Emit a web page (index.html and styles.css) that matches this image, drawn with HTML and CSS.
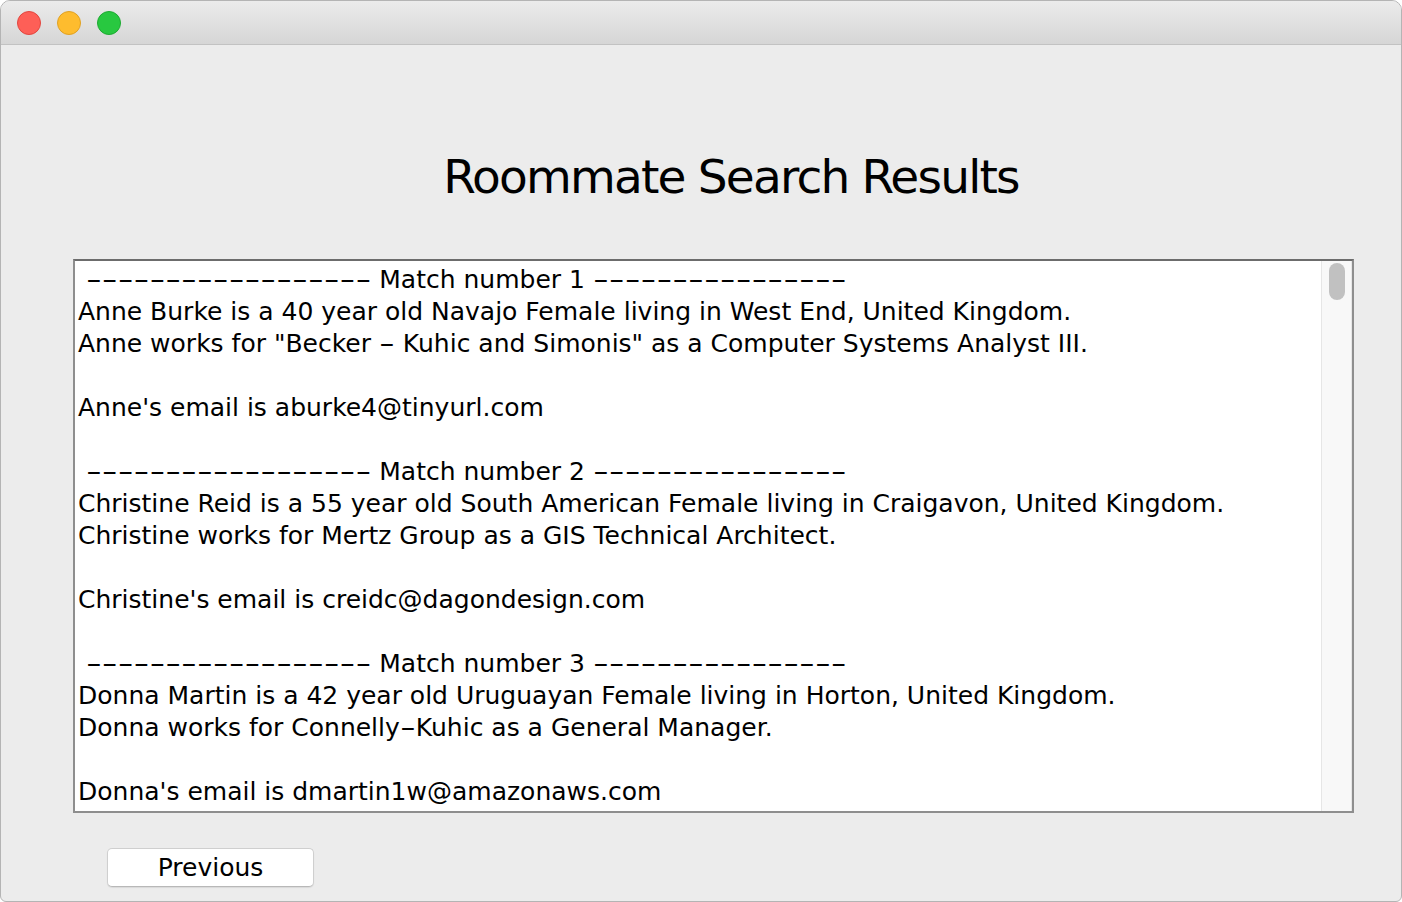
FILE: index.html
```html
<!DOCTYPE html>
<html>
<head>
<meta charset="utf-8">
<link rel="stylesheet" href="styles.css">
</head>
<body>
<div class="window">
  <div class="titlebar">
    <span class="light red"></span>
    <span class="light yellow"></span>
    <span class="light green"></span>
  </div>
  <div class="content">
    <h1 class="heading">Roommate Search Results</h1>
    <div class="textarea">
      <div class="text"><div class="line"> <span class="dash d18">------------------</span> Match number 1 <span class="dash d16">----------------</span></div><div class="line">Anne Burke is a 40 year old Navajo Female living in West End, United Kingdom.</div><div class="line">Anne works for "Becker <span class="dash d1">-</span> Kuhic and Simonis" as a Computer Systems Analyst III.</div><div class="line">&nbsp;</div><div class="line">Anne's email is aburke4@tinyurl.com</div><div class="line">&nbsp;</div><div class="line"> <span class="dash d18">------------------</span> Match number 2 <span class="dash d16">----------------</span></div><div class="line">Christine Reid is a 55 year old South American Female living in Craigavon, United Kingdom.</div><div class="line">Christine works for Mertz Group as a GIS Technical Architect.</div><div class="line">&nbsp;</div><div class="line">Christine's email is creidc@dagondesign.com</div><div class="line">&nbsp;</div><div class="line"> <span class="dash d18">------------------</span> Match number 3 <span class="dash d16">----------------</span></div><div class="line">Donna Martin is a 42 year old Uruguayan Female living in Horton, United Kingdom.</div><div class="line">Donna works for Connelly<span class="dash d1">-</span>Kuhic as a General Manager.</div><div class="line">&nbsp;</div><div class="line">Donna's email is dmartin1w@amazonaws.com</div><div class="line">&nbsp;</div></div>
      <div class="scrollbar"><div class="thumb"></div></div>
    </div>
    <div class="buttons">
      <button class="btn">Previous</button>
    </div>
  </div>
</div>
</body>
</html>
```
FILE: styles.css
```css
* { box-sizing: border-box; }
html, body { margin: 0; padding: 0; background: #ffffff; }
body { width: 1402px; height: 902px; overflow: hidden; font-family: "DejaVu Sans", sans-serif; }
.window {
  width: 1402px; height: 902px;
  border: 1px solid #b4b4b4;
  border-radius: 10px 10px 6px 6px;
  background: #ececec;
  overflow: hidden;
  display: flex; flex-direction: column;
}
.titlebar {
  height: 44px; flex: none;
  background: linear-gradient(#ebebeb, #d6d6d6);
  border-bottom: 1px solid #c2c2c2;
  display: flex; align-items: center; gap: 16px;
  padding-left: 16px; padding-top: 1px;
}
.light { width: 24px; height: 24px; border-radius: 50%; display: block; }
.red { background: #fe5f57; border: 1px solid #e2463f; }
.yellow { background: #febc2e; border: 1px solid #e0a123; }
.green { background: #28c840; border: 1px solid #1eaa32; }
.content { flex: 1; display: flex; flex-direction: column; }
.heading {
  margin: 0; padding: 104px 0 0 60px;
  text-align: center;
  font-weight: normal; font-size: 47px; line-height: 56px;
  letter-spacing: -1.8px;
  color: #000; height: 214px;
}
.textarea {
  margin: 0 47px 0 72px;
  height: 554px;
  border: 2px solid #8e8e8e;
  border-top-color: #6c6c6c;
  background: #fff;
  display: flex;
  overflow: hidden;
}
.text {
  flex: 1; padding: 3px 0 0 3px;
  font-size: 25px; line-height: 32px; color: #000;
  white-space: pre; overflow: hidden;
}
.line { height: 32px; }
.dash {
  display: inline-block;
  transform: scaleX(1.757);
  transform-origin: 0 50%;
}
.d18 { margin-right: 123px; }
.d16 { margin-right: 109px; }
.d1 { margin-right: 7px; }
.scrollbar {
  width: 31px; flex: none;
  background: #f8f8f8;
  border-left: 1px solid #e6e6e6;
  border-right: 1px solid #e6e6e6;
  padding: 2px 0 0 7px;
}
.thumb { width: 16px; height: 37px; border-radius: 8px; background: #c1c1c1; }
.buttons { padding: 35px 0 0 106px; }
.btn {
  width: 207px; height: 39px;
  background: #fff;
  border: 1px solid #cfcfcf; border-bottom-color: #b8b8b8;
  border-radius: 5px;
  box-shadow: 0 1px 1px rgba(0,0,0,0.08);
  font-family: "DejaVu Sans", sans-serif;
  font-size: 25px; color: #000; padding: 0;
}
```
